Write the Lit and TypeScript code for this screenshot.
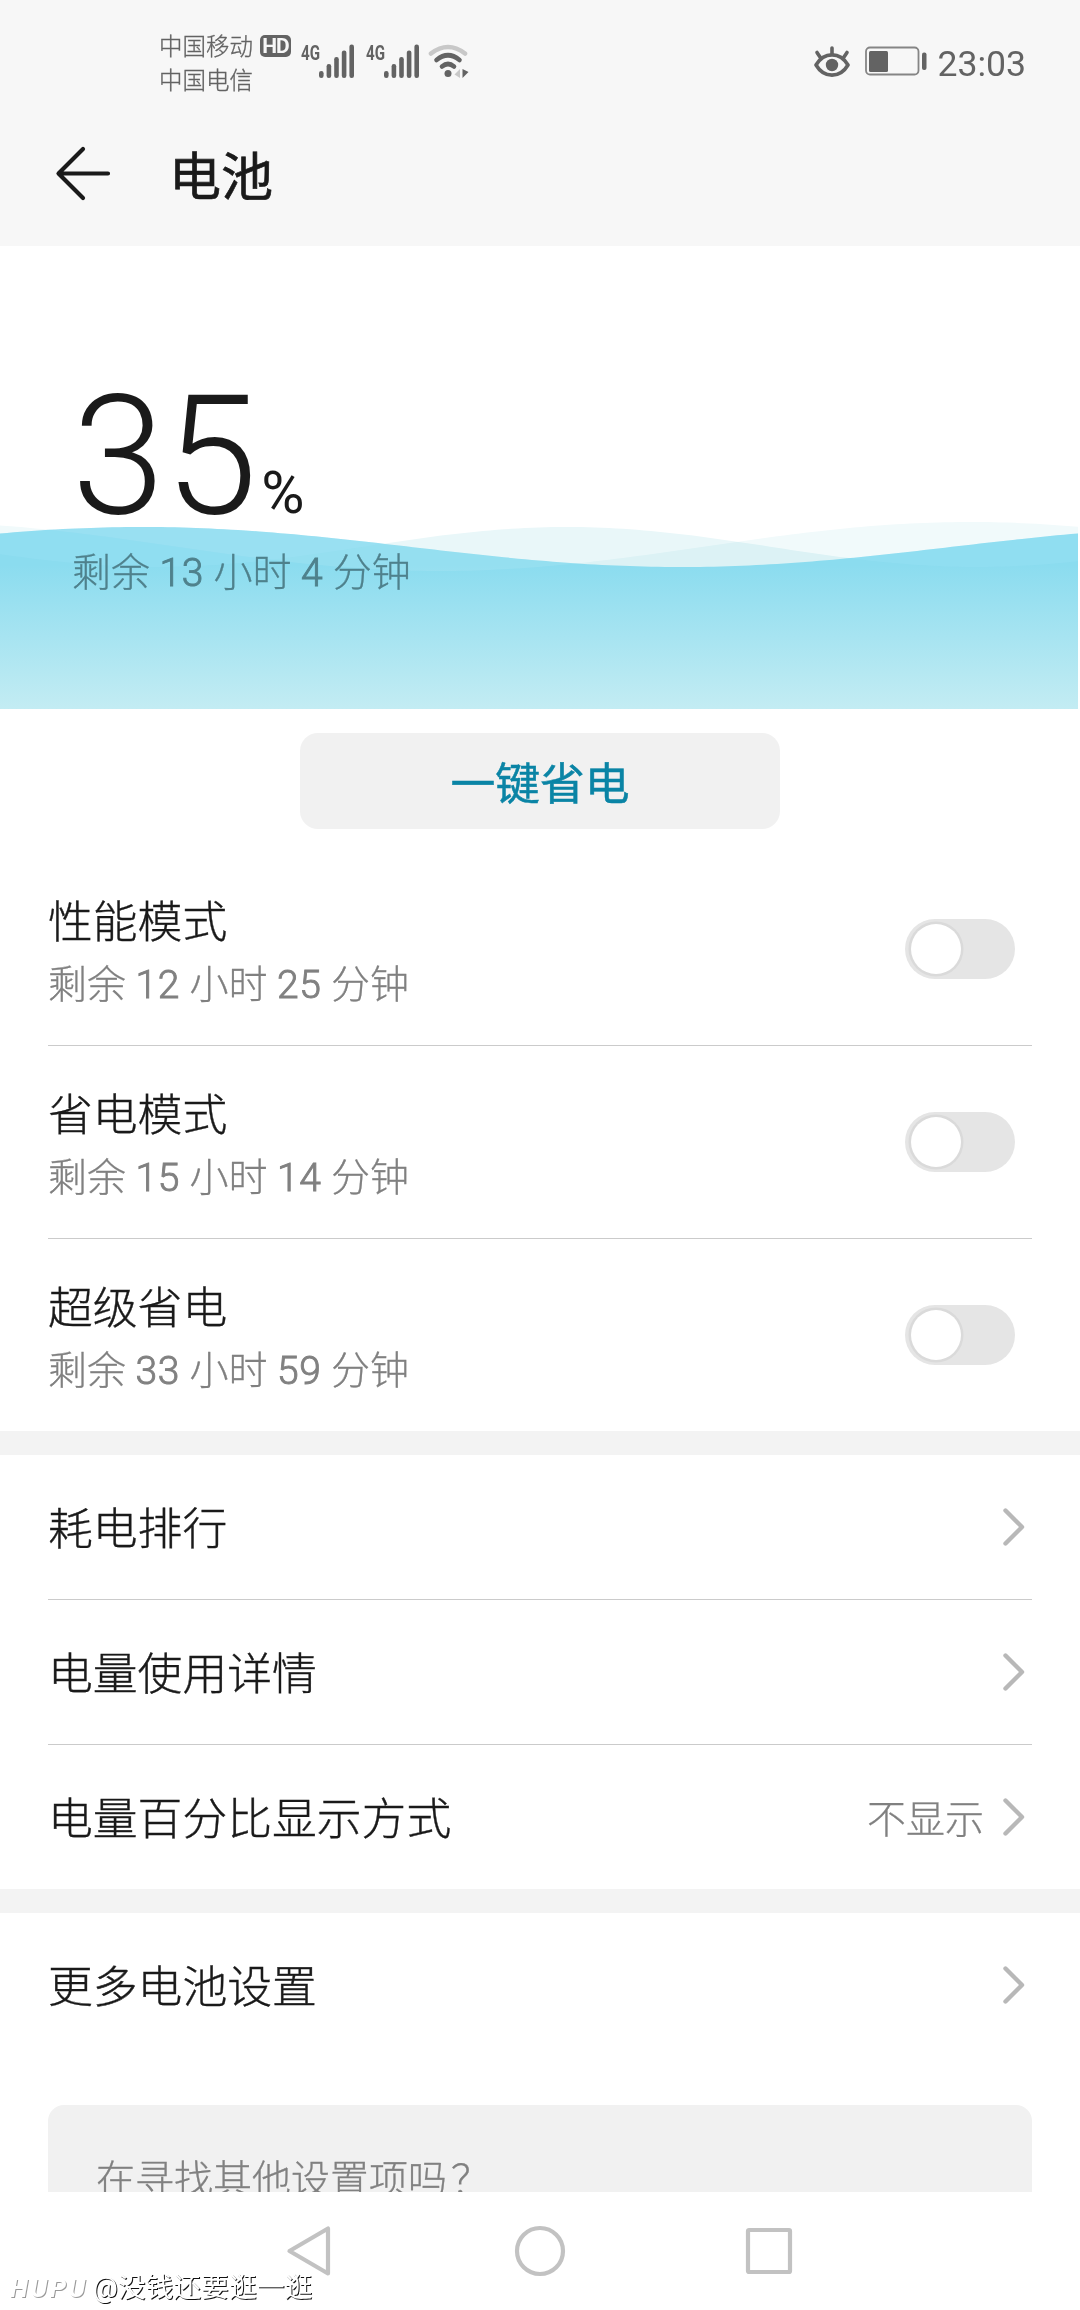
import { LitElement, html, css, svg } from "lit";
import { customElement, property } from "lit/decorators.js";

const chevron = svg`<path d="M3.5 3.5 20 20 3.5 36.5" fill="none" stroke="#b8b8b8" stroke-width="4.4" stroke-linecap="round" stroke-linejoin="round"/>`;

/** Area between a cosine crest line and a horizontal edge (the tank floor by default). */
function wave(peak: number, mid: number, amp: number, period: number, edge = 189): string {
  const pts: string[] = [];
  for (let x = 0; x <= 1078; x += 7) {
    const y = mid - amp * Math.cos((2 * Math.PI * (x - peak)) / period);
    pts.push(`${x} ${y.toFixed(2)}`);
  }
  return `M0 ${edge}L${pts.join("L")}L1078 ${edge}Z`;
}

/** Sets digits apart from the surrounding words so that they can carry their own weight. */
const withNumbers = (text: string) =>
  text.split(/(\d+)/).map((p) => (/\d/.test(p) ? html`<span class="num">${p}</span>` : p));

@customElement("status-bar")
export class StatusBar extends LitElement {
  static styles = css`
    :host { display: flex; justify-content: space-between; height: 120px; box-sizing: border-box; padding: 29px 54px 0 159px; color: #636363; }
    .left, .right { display: flex; align-items: flex-start; }
    .carriers { padding-top: 1px; font-size: 23.5px; line-height: 34px; font-weight: 300; -webkit-text-stroke: 0.3px #636363; }
    .line { display: flex; align-items: center; white-space: nowrap; height: 34px; }
    .hd { margin: 0 0 3px 7px; width: 31px; height: 22px; border-radius: 5px; background: #636363; color: #f7f7f7; font: 700 21px/22px Roboto, sans-serif; text-align: center; letter-spacing: -1px; -webkit-text-stroke: 0; }
    .icons { margin: 11px 0 0 8px; }
    .eye { margin-top: 16px; }
    .batt { margin: 17px 0 0 15px; }
    .time { margin: 2px 0 0 10px; font: 400 35.6px/66px Roboto, sans-serif; }
    svg { display: block; }
    .net { font: 700 20.5px Roboto, sans-serif; fill: #636363; }
  `;
  private bars(x: number) {
    return svg`<text class="net" x=${x} y="20" textLength="19" lengthAdjust="spacingAndGlyphs">4G</text>
      ${[7, 14, 21, 27.5, 33.5].map((h, i) => svg`<rect x=${x + 18 + i * 7.6} y=${38 - h} width="4.6" height=${h} rx="2.2" fill="#636363"/>`)}`;
  }
  render() {
    return html`
      <div class="left">
        <div class="carriers">
          <div class="line">中国移动<span class="hd">HD</span></div>
          <div class="line">中国电信</div>
        </div>
        <svg class="icons" width="172" height="42" viewBox="0 0 172 42">
          ${this.bars(2)} ${this.bars(67)}
          <g fill="none" stroke-linecap="round" stroke-width="4.6" stroke="#636363">
            <path d="M132 13.500Q149 0.500 166 13.500" stroke="#c8c8c8"/>
            <path d="M137.500 20Q149 10.500 160.500 20"/>
            <path d="M143 26.500Q149 21.500 155 26.500"/>
          </g>
          <circle cx="149" cy="33.500" r="3.500" fill="#636363"/>
          <path d="M161 29V38L155.500 34.500Z" fill="#c8c8c8"/>
          <path d="M163.500 29V38L169.500 32Z" fill="#636363"/>
        </svg>
      </div>
      <div class="right">
        <svg class="eye" width="36" height="34" viewBox="0 0 36 34">
          <g fill="none" stroke="#636363" stroke-width="3.600" stroke-linecap="round" stroke-linejoin="round">
            <path d="M2 20C10 6.500 26 6.500 34 20C26 33.500 10 33.500 2 20Z"/>
            <path d="M18 3V9M3 7.500 6 12M33 7.500 30 12"/>
          </g>
          <circle cx="18" cy="20" r="6.200" fill="#636363"/>
        </svg>
        <svg class="batt" width="62" height="30" viewBox="0 0 62 30">
          <rect x="1" y="1.500" width="52.500" height="27" rx="4" fill="none" stroke="#858585" stroke-width="1.800"/>
          <rect x="4" y="5" width="19" height="21" rx="1.500" fill="#636363"/>
          <rect x="57" y="6.500" width="4.500" height="17.500" rx="2" fill="#636363"/>
        </svg>
        <div class="time">23:03</div>
      </div>`;
  }
}

@customElement("mode-row")
export class ModeRow extends LitElement {
  @property() label = "";
  @property() detail = "";
  static styles = css`
    :host { display: flex; justify-content: space-between; align-items: center; height: 192px; box-sizing: border-box; margin: 0 48px; padding-right: 17px; }
    .text { padding-top: 6px; }
    .label { font-size: 44.8px; line-height: 66px; color: #1a1a1a; font-weight: 300; -webkit-text-stroke: 0.4px #1a1a1a; }
    .detail { font-size: 39px; line-height: 58px; color: #808080; font-weight: 300; -webkit-text-stroke: 0.3px #808080; }
    .num { letter-spacing: 0.6px; -webkit-text-stroke: 0.9px #808080; }
    .switch { width: 110px; height: 60px; border-radius: 30px; background: #e5e5e5; box-sizing: border-box; padding: 5px 6px; }
    .knob { width: 50px; height: 50px; border-radius: 50%; background: #fff; box-shadow: 0 0 0 2.5px #dadada; }
  `;
  render() {
    return html`
      <div class="text">
        <div class="label">${this.label}</div>
        <div class="detail">${withNumbers(this.detail)}</div>
      </div>
      <div class="switch"><div class="knob"></div></div>`;
  }
}

@customElement("link-row")
export class LinkRow extends LitElement {
  @property() label = "";
  @property() value = "";
  static styles = css`
    :host { display: flex; align-items: center; height: 144px; margin: 0 48px; }
    .label { flex: 1; padding-top: 6px; font-size: 44.8px; line-height: 66px; color: #1a1a1a; font-weight: 300; -webkit-text-stroke: 0.4px #1a1a1a; }
    .value { padding-top: 5px; font-size: 39px; line-height: 58px; color: #808080; font-weight: 300; -webkit-text-stroke: 0.3px #808080; }
    .chev { margin: 0 6px 0 18px; display: block; }
  `;
  render() {
    return html`
      <div class="label">${this.label}</div>
      <div class="value">${this.value}</div>
      <svg class="chev" width="24" height="40" viewBox="0 0 24 40">${chevron}</svg>`;
  }
}

@customElement("app-root")
export class AppRoot extends LitElement {
  static styles = css`
    :host { display: block; position: relative; width: 1080px; height: 2310px; overflow: hidden; background: #fff; font-family: Roboto, "Noto Sans CJK SC", sans-serif; }
    .head { background: #f7f7f7; height: 246px; }
    .title { display: flex; align-items: center; height: 108px; padding-left: 54px; }
    .title svg { display: block; }
    .name { margin-left: 55px; padding-top: 10px; font-size: 52px; line-height: 76px; color: #1a1a1a; font-weight: 400; -webkit-text-stroke: 0.7px #1a1a1a; }
    .hero { position: relative; height: 463px; }
    .waves { position: absolute; left: 0; bottom: 0; display: block; }
    .front { mix-blend-mode: multiply; }
    .info { position: relative; padding: 110px 0 0 72px; }
    .level { display: flex; align-items: baseline; height: 184px; box-sizing: border-box; padding-top: 28px; color: #1a1a1a; }
    .big { font-size: 167px; line-height: 144px; font-weight: 300; }
    .pct { font-size: 59px; line-height: 60px; font-weight: 400; margin-left: 4px; }
    .remain { padding-top: 4px; font-size: 39px; line-height: 58px; color: #4f818c; font-weight: 300; -webkit-text-stroke: 0.3px #4f818c; }
    .num { letter-spacing: 0.6px; -webkit-text-stroke: 0.9px #4f818c; }
    .save { margin: 24px auto 0; width: 480px; height: 96px; box-sizing: border-box; padding-bottom: 2px; border-radius: 18px; background: #f1f1f1; display: flex; align-items: center; justify-content: center; color: #0a84a5; font-size: 44.8px; font-weight: 400; -webkit-text-stroke: 0.5px #0a84a5; }
    .modes { padding-top: 24px; }
    .rule { height: 1px; margin: 0 48px; background: #cbcbcb; }
    .band { height: 24px; background: #f3f3f3; }
    .more { margin: 48px 48px 0; height: 87px; overflow: hidden; border-radius: 16px 16px 0 0; background: #f1f1f1; padding-left: 48px; font-size: 39px; line-height: 150px; color: #808080; font-weight: 300; -webkit-text-stroke: 0.3px #808080; }
    .ask { margin-left: 4px; }
    .nav { display: flex; justify-content: center; align-items: center; gap: 178px; height: 118px; }
    .nav svg { display: block; }
    .mark { position: absolute; left: 10px; bottom: 4px; display: flex; align-items: center; color: #fff; font-size: 27.8px; line-height: 36px; font-weight: 400; text-shadow: 1px 1px 0 #111; gap: 5px; }
    .brand { font: italic 700 26px/36px Roboto, sans-serif; letter-spacing: 2.6px; text-shadow: 1px 1px 0 #999; }
  `;
  render() {
    return html`
      <div class="head">
        <status-bar></status-bar>
        <div class="title">
          <svg width="60" height="60" viewBox="0 0 60 60">
            <path d="M29 5 4.500 29.500 29 54M5 29.500H54" fill="none" stroke="#1a1a1a" stroke-width="4.200" stroke-linecap="round" stroke-linejoin="round"/>
          </svg>
          <div class="name">电池</div>
        </div>
      </div>
      <div class="hero">
        <svg class="waves" width="1078" height="189" viewBox="0 0 1078 189">
          <defs>
            <linearGradient id="sea" gradientUnits="userSpaceOnUse" x1="0" y1="45" x2="0" y2="189">
              <stop offset="0" stop-color="#8bdcef"/><stop offset="1" stop-color="#c3ecf3"/>
            </linearGradient>
            <clipPath id="tank"><path d=${wave(142, 27, 20, 1078)}/></clipPath>
          </defs>
          <path d=${wave(970, 26.5, 24.5, 1060)} fill="#f1fafb"/>
          <path class="front" d=${wave(567, 27, 20, 820)} fill="#e9f7f9"/>
          <path d=${wave(142, 27, 20, 1078)} fill="url(#sea)"/>
          <g clip-path="url(#tank)">
            <path d=${wave(970, 26.5, 24.5, 1060, 0)} fill="#fff" fill-opacity=".09"/>
            <path d=${wave(567, 27, 20, 820, 0)} fill="#b4ecff" fill-opacity=".14"/>
          </g>
        </svg>
        <div class="info">
          <div class="level"><span class="big">35</span><span class="pct">%</span></div>
          <div class="remain">${withNumbers("剩余 13 小时 4 分钟")}</div>
        </div>
      </div>
      <div class="save">一键省电</div>
      <div class="modes">
        <mode-row label="性能模式" detail="剩余 12 小时 25 分钟"></mode-row>
        <div class="rule"></div>
        <mode-row label="省电模式" detail="剩余 15 小时 14 分钟"></mode-row>
        <div class="rule"></div>
        <mode-row label="超级省电" detail="剩余 33 小时 59 分钟"></mode-row>
      </div>
      <div class="band"></div>
      <link-row label="耗电排行"></link-row>
      <div class="rule"></div>
      <link-row label="电量使用详情"></link-row>
      <div class="rule"></div>
      <link-row label="电量百分比显示方式" value="不显示"></link-row>
      <div class="band"></div>
      <link-row label="更多电池设置"></link-row>
      <div class="more">在寻找其他设置项吗<span class="ask">？</span></div>
      <div class="nav">
        <svg width="52" height="52" viewBox="0 0 52 52"><path d="M44 3.500V48.500L5.500 26Z" fill="none" stroke="#c2c2c2" stroke-width="4.200" stroke-linejoin="round"/></svg>
        <svg width="52" height="52" viewBox="0 0 52 52"><circle cx="26" cy="26" r="23" fill="none" stroke="#c2c2c2" stroke-width="4.200"/></svg>
        <svg width="52" height="52" viewBox="0 0 52 52"><rect x="4" y="5" width="42" height="42" rx="1" fill="none" stroke="#c2c2c2" stroke-width="4.200"/></svg>
      </div>
      <div class="mark"><span class="brand">HUPU</span><span>@没钱还要逛一逛</span></div>`;
  }
}
